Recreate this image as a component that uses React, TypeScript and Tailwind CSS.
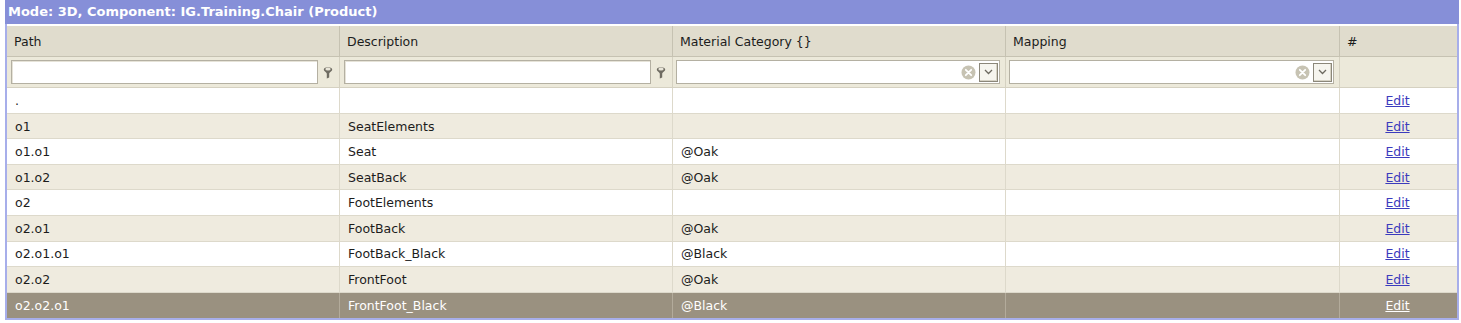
import React from "react";

const rows = [
  { path: ".", desc: "", mat: "" },
  { path: "o1", desc: "SeatElements", mat: "" },
  { path: "o1.o1", desc: "Seat", mat: "@Oak" },
  { path: "o1.o2", desc: "SeatBack", mat: "@Oak" },
  { path: "o2", desc: "FootElements", mat: "" },
  { path: "o2.o1", desc: "FootBack", mat: "@Oak" },
  { path: "o2.o1.o1", desc: "FootBack_Black", mat: "@Black" },
  { path: "o2.o2", desc: "FrontFoot", mat: "@Oak" },
  { path: "o2.o2.o1", desc: "FrontFoot_Black", mat: "@Black" },
];

const cols = "grid grid-cols-[333px_333px_333px_334px_1fr]";

function FilterIcon() {
  return (
    <svg width="10" height="13" viewBox="0 0 10 13" className="shrink-0">
      <path d="M0.8 3.5 C0.8 0.6 9.2 0.6 9.2 3.5 C9.2 5.5 6.2 6.2 6.2 7.8 L6.2 11.5 L3.8 12.5 L3.8 7.8 C3.8 6.2 0.8 5.5 0.8 3.5 Z" fill="#6f6c62" />
      <ellipse cx="5" cy="3" rx="2.7" ry="1.5" fill="#e8e5d8" />
    </svg>
  );
}

function ClearIcon() {
  return (
    <svg width="15" height="15" viewBox="0 0 15 15" className="shrink-0">
      <circle cx="7.5" cy="7.5" r="7" fill="#c7c3b3" />
      <path d="M4.8 4.8 L10.2 10.2 M10.2 4.8 L4.8 10.2" stroke="#fff" strokeWidth="1.8" strokeLinecap="round" />
    </svg>
  );
}

function DropButton() {
  return (
    <div className="flex h-[19px] w-[19px] items-center justify-center border border-[#8b877a] bg-[#f6f5ef] shadow-[inset_-1px_-1px_0_#d6d2c4]">
      <svg width="9" height="6" viewBox="0 0 9 6">
        <path d="M1 1 L4.5 4.5 L8 1" stroke="#6c6960" strokeWidth="1.3" fill="none" />
      </svg>
    </div>
  );
}

function TextFilter() {
  return (
    <div className="flex items-center gap-[5px] border-r border-[#d5d1c1] pl-[4px] pr-[6px]">
      <div className="h-[24px] flex-1 border border-[#b4b0a2] bg-white shadow-[inset_1px_1px_0_#e6e3d8]" />
      <FilterIcon />
    </div>
  );
}

function ComboFilter() {
  return (
    <div className="flex items-center border-r border-[#d5d1c1] pl-[3px] pr-[5px]">
      <div className="flex h-[24px] flex-1 items-center justify-end gap-[3px] border border-[#b4b0a2] bg-white pr-[1px]">
        <ClearIcon />
        <DropButton />
      </div>
    </div>
  );
}

export default function App() {
  return (
    <div className="h-[323px] w-[1461px] bg-white text-[12.5px] text-[#1c1c1c]" style={{ fontFamily: '"DejaVu Sans", Verdana, sans-serif' }}>
      <div className="ml-[5px] w-[1454px] border-b-2 border-l-2 border-r-2 border-[#a7aeea]">
        <div className="-ml-[2px] -mr-[2px] flex h-[24px] items-center bg-[#868fd8] px-[3px] text-[13px] font-bold text-white">
          Mode: 3D, Component: IG.Training.Chair (Product)
        </div>
        <div className="mt-[2px]">
          <div className={`${cols} h-[31px] border-b border-[#c6c2b2] bg-[#e0dccd]`}>
            {["Path", "Description", "Material Category {}", "Mapping", "#"].map((h, i) => (
              <div key={h} className={`flex items-center pl-[7px] pt-[2px] ${i < 4 ? "border-r border-[#c6c2b2]" : ""}`}>
                {h}
              </div>
            ))}
          </div>
          <div className={`${cols} h-[31px] border-b border-[#d5d1c1] bg-[#ece9da]`}>
            <TextFilter />
            <TextFilter />
            <ComboFilter />
            <ComboFilter />
            <div />
          </div>
          {rows.map((r, i) => {
            const sel = i === rows.length - 1;
            const bg = sel ? "bg-[#9a9180] text-white" : i % 2 === 1 ? "bg-[#efebdf]" : "bg-white";
            const line = sel ? "border-[#b3ab9b]" : "border-[#ddd9cb]";
            return (
              <div key={r.path} className={`${cols} h-[25.6px] ${sel ? "" : "border-b"} ${line} ${bg}`}>
                <div className={`flex items-center border-r ${line} pl-[8px] pt-[2px]`}>{r.path}</div>
                <div className={`flex items-center border-r ${line} pl-[8px] pt-[2px]`}>{r.desc}</div>
                <div className={`flex items-center border-r ${line} pl-[8px] pt-[2px]`}>{r.mat}</div>
                <div className={`border-r ${line}`} />
                <div className="flex items-center justify-center pr-[2px] pt-[2px]">
                  <a href="#" className={`underline ${sel ? "text-white" : "text-[#3b3bbd]"}`}>
                    Edit
                  </a>
                </div>
              </div>
            );
          })}
        </div>
      </div>
    </div>
  );
}
